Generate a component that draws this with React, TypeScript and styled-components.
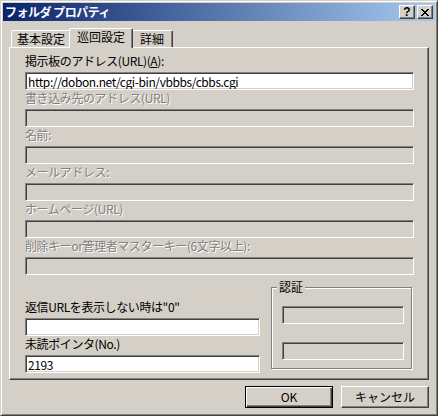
import React from "react";
import styled, { createGlobalStyle } from "styled-components";

const FACE = "#d4d0c8";
const FONT = `"Noto Sans CJK JP", "Liberation Sans", sans-serif`;

const Global = createGlobalStyle`
  html, body { margin: 0; padding: 0; background: ${FACE}; }
  body { width: 438px; height: 416px; overflow: hidden; font-family: ${FONT}; font-size: 12px; color: #000; }
  * { box-sizing: border-box; }
`;

const Window = styled.div`
  width: 438px;
  height: 416px;
  border: 1px solid;
  border-color: ${FACE} #404040 #404040 ${FACE};
  box-shadow: inset 1px 1px #fff, inset -1px -1px #808080;
  padding: 2px;
  background: ${FACE};
  display: flex;
  flex-direction: column;
`;

const TitleBar = styled.div`
  height: 18px;
  flex: none;
  display: flex;
  align-items: center;
  padding: 0 2px 0 2px;
  background: linear-gradient(to right, #0a246a, #a6caf0);
`;

const TitleText = styled.div`
  flex: 1;
  color: #fff;
  font-weight: bold;
  font-size: 12px;
  line-height: 18px;
  letter-spacing: -0.5px;
  white-space: nowrap;
`;

const CaptionButtons = styled.div`
  display: flex;
  gap: 2px;
`;

const CaptionButton = styled.div`
  width: 16px;
  height: 14px;
  background: ${FACE};
  border: 1px solid;
  border-color: #fff #404040 #404040 #fff;
  box-shadow: inset -1px -1px #808080;
  display: flex;
  align-items: center;
  justify-content: center;
  font-family: "Liberation Sans", sans-serif;
  font-weight: bold;
  font-size: 12px;
  line-height: 12px;
`;

const Body = styled.div`
  flex: 1;
  padding: 7px 6px 0 6px;
  display: flex;
  flex-direction: column;
`;

const TabRow = styled.div`
  height: 19px;
  display: flex;
  align-items: flex-end;
  padding-left: 2px;
`;

const Tab = styled.div<{ $active?: boolean; $w: number }>`
  position: relative;
  width: ${(p) => p.$w + (p.$active ? 4 : 0)}px;
  height: ${(p) => (p.$active ? 20 : 17)}px;
  margin: ${(p) => (p.$active ? "0 -2px -1px -2px" : "0")};
  z-index: ${(p) => (p.$active ? 1 : 0)};
  background: ${FACE};
  border: 1px solid;
  border-bottom: none;
  border-color: #fff #404040 transparent #fff;
  border-radius: 2px 2px 0 0;
  box-shadow: inset -1px 0 #808080;
  text-align: center;
  line-height: 16px;
  white-space: nowrap;
`;

const Panel = styled.div`
  height: 333px;
  flex: none;
  border: 1px solid;
  border-color: #fff #404040 #404040 #fff;
  box-shadow: inset -1px -1px #808080;
  padding: 5px 14px 0 15px;
  display: flex;
  flex-direction: column;
`;

const Field = styled.div`
  display: flex;
  flex-direction: column;
`;

const Label = styled.div<{ $disabled?: boolean }>`
  height: 19px;
  line-height: 15px;
  white-space: nowrap;
  letter-spacing: -0.4px;
  color: ${(p) => (p.$disabled ? "#808080" : "#000")};
  text-shadow: ${(p) => (p.$disabled ? "1px 1px 0 #fff" : "none")};
`;

const Edit = styled.input<{ $disabled?: boolean; $w?: number }>`
  display: block;
  width: ${(p) => (p.$w ? `${p.$w}px` : "100%")};
  height: 18px;
  margin: 0;
  padding: 0 2px;
  border: 1px solid;
  border-color: #808080 #fff #fff #808080;
  box-shadow: inset 1px 1px #404040, inset -1px -1px ${FACE};
  background: ${(p) => (p.$disabled ? FACE : "#fff")};
  font-family: ${FONT};
  font-size: 12px;
  letter-spacing: -0.4px;
  color: #000;
  outline: none;
`;

const BottomRow = styled.div`
  display: flex;
  margin-top: 12px;
`;

const LeftCol = styled.div`
  width: 235px;
  padding-top: 12px;
  display: flex;
  flex-direction: column;
`;

const GroupBox = styled.div`
  position: relative;
  margin-left: 11px;
  width: 141px;
  height: 82px;
  border: 1px solid #808080;
  box-shadow: inset 1px 1px #fff, 1px 1px #fff;
  padding: 18px 0 0 10px;
  display: flex;
  flex-direction: column;
  gap: 18px;
`;

const GroupCaption = styled.div`
  position: absolute;
  top: -8px;
  left: 5px;
  padding: 0 2px;
  background: ${FACE};
  line-height: 14px;
`;

const ButtonRow = styled.div`
  display: flex;
  justify-content: flex-end;
  gap: 8px;
  margin-top: 6px;
`;

const Button = styled.div<{ $default?: boolean }>`
  width: 88px;
  height: 22px;
  background: ${FACE};
  border: 1px solid;
  border-color: ${(p) => (p.$default ? "#000" : "#fff #404040 #404040 #fff")};
  box-shadow: ${(p) =>
    p.$default
      ? "inset 1px 1px #fff, inset -1px -1px #404040, inset -2px -2px #808080"
      : "inset -1px -1px #808080"};
  display: flex;
  align-items: center;
  justify-content: center;
  line-height: 14px;
`;

const X_PATTERN = [
  "11000011",
  "01100110",
  "00111100",
  "00011000",
  "00111100",
  "01100110",
  "11000011",
];

const CloseGlyph = () => (
  <svg width="8" height="7" viewBox="0 0 8 7" shapeRendering="crispEdges">
    {X_PATTERN.flatMap((row, y) =>
      row.split("").map((c, x) => (c === "1" ? <rect key={`${x}-${y}`} x={x} y={y} width="1" height="1" fill="#000" /> : null))
    )}
  </svg>
);

const fields: { label: React.ReactNode; value?: string; disabled?: boolean }[] = [
  {
    label: (
      <>
        掲示板のアドレス(URL)(<u>A</u>):
      </>
    ),
    value: "http://dobon.net/cgi-bin/vbbbs/cbbs.cgi",
  },
  { label: "書き込み先のアドレス(URL)", disabled: true },
  { label: "名前:", disabled: true },
  { label: "メールアドレス:", disabled: true },
  { label: "ホームページ(URL)", disabled: true },
  { label: "削除キーor管理者マスターキー(6文字以上):", disabled: true },
];

export default function App() {
  return (
    <>
      <Global />
      <Window>
        <TitleBar>
          <TitleText>フォルダ プロパティ</TitleText>
          <CaptionButtons>
            <CaptionButton>?</CaptionButton>
            <CaptionButton>
              <CloseGlyph />
            </CaptionButton>
          </CaptionButtons>
        </TitleBar>
        <Body>
          <TabRow>
            <Tab $w={60}>基本設定</Tab>
            <Tab $w={60} $active>
              巡回設定
            </Tab>
            <Tab $w={42}>詳細</Tab>
          </TabRow>
          <Panel>
            {fields.map((f, i) => (
              <Field key={i}>
                <Label $disabled={f.disabled}>{f.label}</Label>
                <Edit $disabled={f.disabled} readOnly defaultValue={f.value ?? ""} />
              </Field>
            ))}
            <BottomRow>
              <LeftCol>
                <Field>
                  <Label>返信URLを表示しない時は"0"</Label>
                  <Edit readOnly defaultValue="" />
                </Field>
                <Field>
                  <Label>未読ポインタ(No.)</Label>
                  <Edit readOnly defaultValue="2193" />
                </Field>
              </LeftCol>
              <GroupBox>
                <GroupCaption>認証</GroupCaption>
                <Edit $disabled $w={122} readOnly defaultValue="" />
                <Edit $disabled $w={122} readOnly defaultValue="" />
              </GroupBox>
            </BottomRow>
          </Panel>
          <ButtonRow>
            <Button $default>OK</Button>
            <Button>キャンセル</Button>
          </ButtonRow>
        </Body>
      </Window>
    </>
  );
}
